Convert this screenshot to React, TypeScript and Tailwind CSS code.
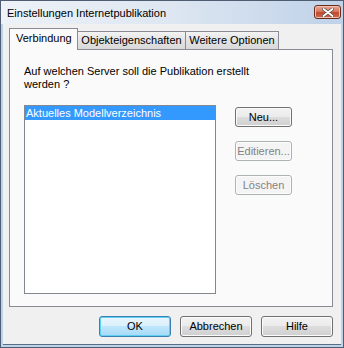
import React from "react";

const font = "font-['Liberation_Sans',Arial,sans-serif]";

function Button({
  children,
  disabled,
  primary,
  className = "",
}: {
  children: React.ReactNode;
  disabled?: boolean;
  primary?: boolean;
  className?: string;
}) {
  let look =
    "border-[#707070] bg-[linear-gradient(#f2f2f2_0%,#ebebeb_50%,#dddddd_50%,#cfcfcf_100%)] text-black shadow-[inset_0_0_0_1px_#fbfbfb]";
  if (disabled)
    look = "border-[#adb2b5] bg-[#f4f4f4] text-[#838383] shadow-[inset_0_0_0_1px_#fcfcfc]";
  if (primary)
    look =
      "border-[#3c7fb1] bg-[linear-gradient(#eaf6fd_0%,#d9f0fc_50%,#bee6fd_50%,#a7d9f5_100%)] text-black shadow-[inset_0_0_0_1px_#5fd0f5]";
  return (
    <div
      className={`flex items-center justify-center rounded-[3px] border text-[11px] leading-none ${look} ${className}`}
    >
      {children}
    </div>
  );
}

export default function App() {
  return (
    <div
      className={`${font} w-[344px] h-[348px] flex flex-col border border-[#4f5d72] bg-[#bcd3ec] text-black`}
    >
      {/* title bar */}
      <div className="h-[23px] shrink-0 flex items-center justify-between pl-[6px] pr-[2px] bg-[linear-gradient(to_right,#eef2f8,#dde6f1_50%,#bfd2e9)]">
        <span className="text-[11px] leading-none pt-[1px]">
          Einstellungen Internetpublikation
        </span>
        <div className="mt-[-1px] w-[27px] h-[14px] rounded-[3px] border border-[#6d2a1d] bg-[linear-gradient(#e8a893_0%,#d47a62_45%,#c24a2e_55%,#cf6a4c_100%)] flex items-center justify-center shadow-[inset_0_0_0_1px_#eec1b2]">
          <svg width="12" height="9" viewBox="0 0 12 9">
            <path
              d="M1.5 1 L10.5 8 M10.5 1 L1.5 8"
              stroke="#5a4a46"
              strokeWidth="3.2"
              strokeLinecap="round"
            />
            <path
              d="M1.5 1 L10.5 8 M10.5 1 L1.5 8"
              stroke="#ffffff"
              strokeWidth="1.8"
              strokeLinecap="round"
            />
          </svg>
        </div>
      </div>

      {/* client area */}
      <div className="flex-1 mx-[2px] mb-[2px] bg-[#f0f0f0] flex flex-col pt-[4px] pl-[6px] pr-[8px] border-b border-[#5d6b80]">
        {/* tabs */}
        <div className="flex items-end h-[21px] relative z-10">
          <div className="w-[69px] h-[22px] mb-[-1px] border border-b-0 border-[#898c95] bg-[#fafafa] flex items-center pl-[6px] text-[11px] pb-[2px]">
            Verbindung
          </div>
          <div className="w-[109px] h-[18px] -ml-px border border-b-0 border-[#898c95] bg-[linear-gradient(#f3f3f3,#e3e3e3_50%,#d9d9d9)] flex items-center justify-center text-[11px]">
            Objekteigenschaften
          </div>
          <div className="w-[94px] h-[18px] -ml-px border border-b-0 border-[#898c95] bg-[linear-gradient(#f3f3f3,#e3e3e3_50%,#d9d9d9)] flex items-center justify-center text-[11px]">
            Weitere Optionen
          </div>
        </div>

        {/* panel */}
        <div className="h-[258px] border border-[#898c95] bg-[#fafafa] pl-[14px] pt-[15px]">
          <p className="text-[11px] leading-[13px] w-[250px]">
            Auf welchen Server soll die Publikation erstellt werden ?
          </p>
          <div className="flex mt-[14px]">
            <div className="w-[192px] h-[189px] border border-[#828790] bg-white">
              <div className="h-[14px] bg-[#3399ff] text-white text-[11px] leading-[14px] pl-[1px]">
                Aktuelles Modellverzeichnis
              </div>
            </div>
            <div className="flex flex-col gap-[14px] ml-[19px] mt-[2px]">
              <Button className="w-[57px] h-[20px]">Neu...</Button>
              <Button className="w-[57px] h-[20px]" disabled>
                Editieren...
              </Button>
              <Button className="w-[57px] h-[20px]" disabled>
                Löschen
              </Button>
            </div>
          </div>
        </div>

        {/* bottom buttons */}
        <div className="flex justify-end gap-[9px] mt-[9px]">
          <Button className="w-[72px] h-[21px]" primary>
            OK
          </Button>
          <Button className="w-[72px] h-[21px]">Abbrechen</Button>
          <Button className="w-[72px] h-[21px]">Hilfe</Button>
        </div>
      </div>
    </div>
  );
}
